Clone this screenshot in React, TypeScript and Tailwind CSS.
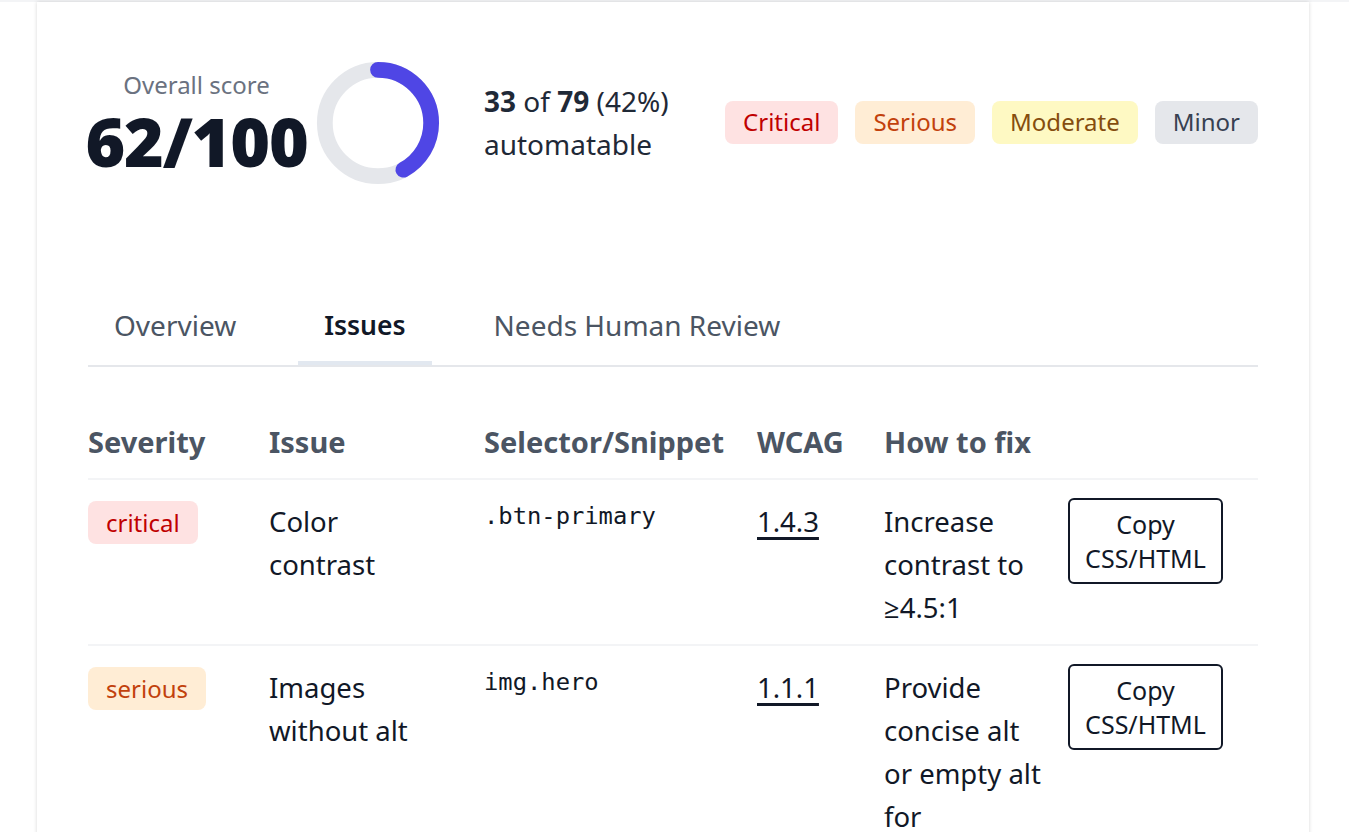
import React from "react";

const font = { fontFamily: '"Noto Sans", "Open Sans", sans-serif' };

function Donut({ pct }: { pct: number }) {
  const r = 54;
  const c = 2 * Math.PI * r;
  return (
    <svg width="126" height="126" viewBox="0 0 128 128" className="shrink-0">
      <circle cx="64" cy="64" r={r} fill="none" stroke="#e5e7eb" strokeWidth="16" />
      <circle
        cx="64"
        cy="64"
        r={r}
        fill="none"
        stroke="#4f46e5"
        strokeWidth="16"
        strokeLinecap="round"
        strokeDasharray={`${c * pct} ${c}`}
        transform="rotate(-90 64 64)"
      />
    </svg>
  );
}

function Badge({ label, cls }: { label: string; cls: string }) {
  return (
    <span className={`inline-flex h-[43px] items-center rounded-[8px] px-[18px] text-[24px] ${cls}`}>{label}</span>
  );
}

const rows = [
  {
    sev: "critical",
    sevCls: "bg-[#fee2e2] text-[#c00000]",
    issue: "Color contrast",
    sel: ".btn-primary",
    wcag: "1.4.3",
    fix: "Increase contrast to ≥4.5:1",
  },
  {
    sev: "serious",
    sevCls: "bg-[#ffedd5] text-[#c2410c]",
    issue: "Images without alt",
    sel: "img.hero",
    wcag: "1.1.1",
    fix: "Provide concise alt or empty alt for decorative images",
  },
];

const cols = "grid grid-cols-[181px_215px_273px_127px_184px_1fr]";

export default function App() {
  return (
    <div className="min-h-screen bg-white text-[#111827]" style={font}>
      <div className="h-[2px] bg-[#f3f4f6]" />
      <div className="ml-[37px] w-[1272px] bg-white px-[51px] pt-[58px] pb-[60px] shadow-[0_0_4px_rgba(0,0,0,0.16)]">
        {/* Score row */}
        <div className="flex items-center justify-between">
          <div className="flex items-center">
            <div className="flex w-[217px] flex-col items-center">
              <div className="text-[24px] leading-[36px] text-[#6b7280]">Overall score</div>
              <div className="text-[68px] font-black leading-[76px] tracking-[-1.2px] text-[#111827]">62/100</div>
            </div>
            <div className="ml-[10px]">
              <Donut pct={0.42} />
            </div>
            <div className="ml-[43px] text-[28px] leading-[43px] text-[#1f2937]">
              <div>
                <b className="font-bold">33</b> of <b className="font-bold">79</b> (42%)
              </div>
              <div>automatable</div>
            </div>
          </div>
          <div className="flex gap-[17px] pb-[2px]">
            <Badge label="Critical" cls="bg-[#fee2e2] text-[#c00000]" />
            <Badge label="Serious" cls="bg-[#ffedd5] text-[#c2410c]" />
            <Badge label="Moderate" cls="bg-[#fef9c3] text-[#854d0e]" />
            <Badge label="Minor" cls="bg-[#e5e7eb] text-[#374151]" />
          </div>
        </div>

        {/* Tabs */}
        <div className="mt-[118px] flex gap-[36px] border-b-2 border-[#e5e7eb] text-[28px] leading-[43px]">
          <div className="border-b-4 border-transparent px-[26px] pb-[14px] text-[#4b5563]">Overview</div>
          <div className="border-b-4 border-[#e2e8f0] px-[26px] pb-[14px] text-[26.5px] font-semibold text-[#111827]">
            Issues
          </div>
          <div className="border-b-4 border-transparent px-[26px] pb-[14px] text-[#4b5563]">Needs Human Review</div>
        </div>

        {/* Table */}
        <div className="mt-[53px]">
          <div className={`${cols} border-b-2 border-[#f3f4f6] pb-[15px] text-[29px] font-bold leading-[43px] text-[#4b5563]`}>
            <div>Severity</div>
            <div>Issue</div>
            <div>Selector/Snippet</div>
            <div>WCAG</div>
            <div>How to fix</div>
            <div></div>
          </div>
          {rows.map((r) => (
            <div
              key={r.sev}
              className={`${cols} border-b-2 border-[#f3f4f6] pt-[20px] pb-[15px] text-[27.5px] leading-[43px] text-[#111827]`}
            >
              <div>
                <span className={`inline-flex h-[43px] items-center rounded-[8px] px-[18px] text-[24px] ${r.sevCls}`}>
                  {r.sev}
                </span>
              </div>
              <div className="pr-[55px]">{r.issue}</div>
              <div
                className="pt-[2px] text-[23.8px] leading-[28px]"
                style={{ fontFamily: '"DejaVu Sans Mono", "Liberation Mono", monospace' }}
              >
                {r.sel}
              </div>
              <div>
                <a href="#" className="underline decoration-[3px] underline-offset-[5px] text-[#111827]">
                  {r.wcag}
                </a>
              </div>
              <div className="pr-[16px]">{r.fix}</div>
              <div>
                <button className="-mt-[2px] w-[155px] rounded-[6px] border-2 border-[#111827] bg-white py-[7px] text-[25px] leading-[34px] text-[#111827]">
                  Copy
                  <br />
                  CSS/HTML
                </button>
              </div>
            </div>
          ))}
        </div>
      </div>
    </div>
  );
}
